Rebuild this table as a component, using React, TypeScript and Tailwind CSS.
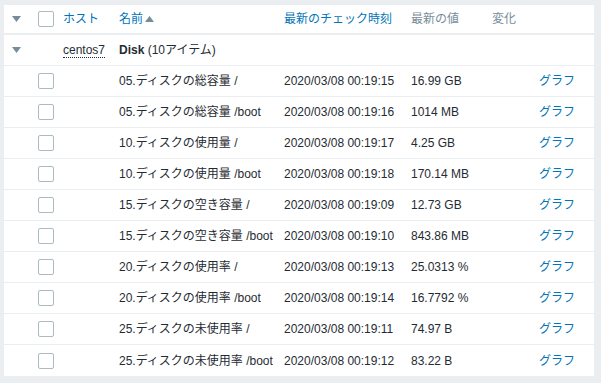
import React from "react";

const rows = [
  ["05.ディスクの総容量 /", "2020/03/08 00:19:15", "16.99 GB"],
  ["05.ディスクの総容量 /boot", "2020/03/08 00:19:16", "1014 MB"],
  ["10.ディスクの使用量 /", "2020/03/08 00:19:17", "4.25 GB"],
  ["10.ディスクの使用量 /boot", "2020/03/08 00:19:18", "170.14 MB"],
  ["15.ディスクの空き容量 /", "2020/03/08 00:19:09", "12.73 GB"],
  ["15.ディスクの空き容量 /boot", "2020/03/08 00:19:10", "843.86 MB"],
  ["20.ディスクの使用率 /", "2020/03/08 00:19:13", "25.0313 %"],
  ["20.ディスクの使用率 /boot", "2020/03/08 00:19:14", "16.7792 %"],
  ["25.ディスクの未使用率 /", "2020/03/08 00:19:11", "74.97 B"],
  ["25.ディスクの未使用率 /boot", "2020/03/08 00:19:12", "83.22 B"],
];

const cols = "grid grid-cols-[29px_25px_56px_165px_127px_81px_47px_1fr] items-center";

function Tri() {
  return (
    <svg width="9" height="6" viewBox="0 0 9 6" className="ml-[8px]">
      <path d="M0 0 H9 L4.5 6 Z" fill="#768d99" />
    </svg>
  );
}

function Box() {
  return <div className="w-[16px] h-[16px] border border-[#acbbc2] rounded-[2px] bg-white" />;
}

export default function App() {
  return (
    <div
      className="w-[601px] h-[383px] bg-[#ebeef0] pt-[5px] pl-[4px] text-[12px] text-[#1f2c33]"
      style={{ fontFamily: '"Liberation Sans", Arial, "Noto Sans CJK JP", sans-serif' }}
    >
      <div className="w-[590px] h-[371px] bg-white">
        <div className={`${cols} h-[30px] border-b-2 border-[#ebeef0]`}>
          <div><Tri /></div>
          <div className="pl-[5px]"><Box /></div>
          <div className="pl-[5px] text-[#0275b8]">ホスト</div>
          <div className="pl-[5px] text-[#0275b8] flex items-center">
            名前
            <svg width="9" height="6" viewBox="0 0 9 6" className="ml-[2px]">
              <path d="M0 6 H9 L4.5 0 Z" fill="#768d99" />
            </svg>
          </div>
          <div className="pl-[5px] text-[#0275b8] whitespace-nowrap">最新のチェック時刻</div>
          <div className="pl-[5px] text-[#768d99]">最新の値</div>
          <div className="pl-[5px] text-[#768d99]">変化</div>
          <div />
        </div>
        <div className={`${cols} h-[31px] border-b border-[#ebeef0]`}>
          <div><Tri /></div>
          <div />
          <div className="pl-[5px]">
            <span className="border-b border-dotted border-[#1f2c33] leading-[14px] inline-block">centos7</span>
          </div>
          <div className="pl-[5px] col-span-5">
            <span className="font-bold">Disk</span> (10アイテム)
          </div>
        </div>
        {rows.map((r, i) => (
          <div key={i} className={`${cols} h-[31px] ${i < rows.length - 1 ? "border-b border-[#ebeef0]" : ""}`}>
            <div />
            <div className="pl-[5px]"><Box /></div>
            <div />
            <div className="pl-[5px] whitespace-nowrap">{r[0]}</div>
            <div className="pl-[5px] whitespace-nowrap">{r[1]}</div>
            <div className="pl-[5px] whitespace-nowrap">{r[2]}</div>
            <div />
            <div className="pl-[5px] text-[#0275b8]">グラフ</div>
          </div>
        ))}
      </div>
    </div>
  );
}
